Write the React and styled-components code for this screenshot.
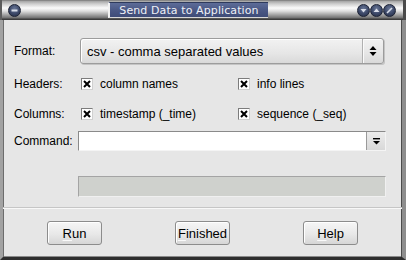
import React from 'react';
import styled, { createGlobalStyle } from 'styled-components';

const GlobalStyle = createGlobalStyle`
    html, body {
        margin: 0;
        padding: 0;
        background: #e6e6e6;
    }
    body {
        font-family: "Liberation Sans", Arial, sans-serif;
        font-size: 12px;
        color: #000;
    }
`;

const Window = styled.div`
    width: 406px;
    height: 260px;
    display: flex;
    flex-direction: column;
    box-sizing: border-box;
    background: #e6e6e6;
`;

// Title bar
const TitleBar = styled.div`
    height: 20px;
    display: flex;
    align-items: center;
    box-sizing: border-box;
    border-left: 2px solid #5c5c5c;
    border-right: 3px solid #4a4a4a;
    background: linear-gradient(to bottom,
        #6a6a6a 0px, #a4a4a4 1px, #cfcfcf 4px, #fbfbfb 8px,
        #e0e0e0 11px, #a0a0a0 15px, #707070 18px, #3c3c3c 19px, #3c3c3c 20px);
`;

const LeftArea = styled.div`
    width: 106px;
    display: flex;
    align-items: center;
    padding-left: 6px;
    box-sizing: border-box;
`;

const TitleBox = styled.div`
    width: 160px;
    height: 16px;
    display: flex;
    align-items: center;
    justify-content: center;
    box-sizing: border-box;
    border-left: 2px solid #f2f2f2;
    border-top: 1px solid #2e3a5c;
    border-bottom: 1px solid #d8d8d8;
    background: linear-gradient(to bottom, #5d6c98 0%, #4a5885 50%, #3f4c78 100%);
    color: #eef0f6;
    font-family: "DejaVu Sans", sans-serif;
    font-size: 11px;
    letter-spacing: 0.1px;
`;

const Spacer = styled.div`
    flex: 1;
`;

const ButtonGroup = styled.div`
    display: flex;
    gap: 0px;
    padding-right: 7px;
`;

const CircleButton = styled.div`
    width: 13px;
    height: 13px;
    border-radius: 50%;
    box-sizing: border-box;
    border: 1px solid #1c2234;
    background: radial-gradient(circle at 50% 35%, #6a7898 0%, #3c4868 55%, #222a40 100%);
    display: flex;
    align-items: center;
    justify-content: center;
    margin-right: ${p => (p.$gap ? p.$gap : 0)}px;
`;

const Glyph = ({ kind }) => (
    <svg width="9" height="9" viewBox="0 0 9 9">
        {kind === 'minus' && <rect x="1.5" y="3.5" width="6" height="2" fill="#d8dde8" />}
        {kind === 'down' && <polygon points="1.5,3 7.5,3 4.5,6.5" fill="#d8dde8" />}
        {kind === 'up' && <polygon points="1.5,6 7.5,6 4.5,2.5" fill="#d8dde8" />}
        {kind === 'slash' && <line x1="2" y1="7" x2="7" y2="2" stroke="#d8dde8" strokeWidth="1.6" />}
    </svg>
);

// Window body
const Body = styled.div`
    flex: 1;
    display: flex;
    flex-direction: column;
    border-left: 3px solid #a2a2a2;
    border-right: 4px solid #8e8e8e;
    border-bottom: 3px solid #2e2e2e;
    box-shadow: inset 1px 0 #6c6c6c, inset -1px 0 #4c4c4c, inset 0 -1px #8a8a8a;
    box-sizing: border-box;
`;

const Form = styled.div`
    padding: 18px 16px 0 11px;
    display: flex;
    flex-direction: column;
`;

const Row = styled.div`
    display: flex;
    align-items: center;
    height: ${p => p.$h}px;
    margin-top: ${p => p.$top || 0}px;
`;

const Label = styled.div`
    width: 64px;
    flex-shrink: 0;
`;

const Control = styled.div`
    flex: 1;
    display: flex;
    align-items: center;
    height: 100%;
`;

// Format combo
const Combo = styled.div`
    flex: 1;
    height: 100%;
    margin: 0 2px;
    display: flex;
    box-sizing: border-box;
    border: 1px solid #9c9c9c;
    border-radius: 3px;
    background: linear-gradient(to bottom, #f2f2f2 0%, #e6e6e6 60%, #d9d9d9 100%);
    box-shadow: 1px 1px 0 #c4c4c4, inset 1px 1px 0 #fff;
`;

const ComboText = styled.div`
    flex: 1;
    display: flex;
    align-items: center;
    padding-left: 6px;
    font-size: 13px;
`;

const ComboArrows = styled.div`
    width: 20px;
    border-left: 1px solid #b0b0b0;
    box-shadow: inset 1px 0 #fafafa;
    display: flex;
    align-items: center;
    justify-content: center;
`;

// Checkboxes
const CheckGrid = styled.div`
    display: grid;
    grid-template-columns: 157px 1fr;
    padding-left: 3px;
    flex: 1;
`;

const CheckItem = styled.div`
    display: flex;
    align-items: center;
    gap: 7px;
`;

const Box = styled.div`
    width: 12px;
    height: 12px;
    box-sizing: border-box;
    background: #fff;
    border-top: 1px solid #7c7c7c;
    border-left: 1px solid #7c7c7c;
    border-right: 1px solid #d0d0d0;
    border-bottom: 1px solid #d0d0d0;
    display: flex;
    align-items: center;
    justify-content: center;
`;

const Check = ({ label }) => (
    <CheckItem>
        <Box>
            <svg width="8" height="8" viewBox="0 0 8 8">
                <path d="M1 1 L7 7 M7 1 L1 7" stroke="#000" strokeWidth="2" />
            </svg>
        </Box>
        <span>{label}</span>
    </CheckItem>
);

// Command entry
const Entry = styled.div`
    flex: 1;
    height: 100%;
    display: flex;
    box-sizing: border-box;
    background: #fff;
    border-top: 1px solid #8a8a8a;
    border-left: 1px solid #8a8a8a;
    border-bottom: 1px solid #f4f4f4;
    border-right: 1px solid #f4f4f4;
`;

const EntryButton = styled.div`
    width: 19px;
    margin-left: auto;
    box-sizing: border-box;
    border-left: 1px solid #9a9a9a;
    background: linear-gradient(to bottom, #ececec, #d8d8d8);
    display: flex;
    align-items: center;
    justify-content: center;
`;

const Progress = styled.div`
    flex: 1;
    height: 100%;
    box-sizing: border-box;
    background: #cfd1cd;
    border-top: 1px solid #a4a4a4;
    border-left: 1px solid #a4a4a4;
    border-bottom: 1px solid #f0f0f0;
    border-right: 1px solid #f0f0f0;
`;

// Footer buttons
const Footer = styled.div`
    margin-top: auto;
    height: 50px;
    border-top: 1px solid #c6c6c6;
    box-shadow: inset 0 1px #f8f8f8;
    display: flex;
    justify-content: center;
    align-items: flex-start;
    gap: 73px;
    padding-top: 13px;
    box-sizing: border-box;
`;

const Button = styled.div`
    width: 55px;
    height: 24px;
    box-sizing: border-box;
    border: 1px solid #8c8c8c;
    border-radius: 3px;
    background: linear-gradient(to bottom, #f6f6f6 0%, #e8e8e8 55%, #d6d6d6 100%);
    box-shadow: inset 1px 1px 0 #fff;
    display: flex;
    align-items: center;
    justify-content: center;
    font-size: 13px;
`;

const Mnemonic = styled.span`
    text-decoration: underline;
    text-decoration-color: #fafafa;
    text-underline-offset: 2px;
`;

const Btn = ({ text }) => (
    <Button>
        <Mnemonic>{text[0]}</Mnemonic>{text.slice(1)}
    </Button>
);

const App = () => (
    <Window>
        <GlobalStyle />
        <TitleBar>
            <LeftArea>
                <CircleButton><Glyph kind="minus" /></CircleButton>
            </LeftArea>
            <TitleBox>Send Data to Application</TitleBox>
            <Spacer />
            <ButtonGroup>
                <CircleButton><Glyph kind="down" /></CircleButton>
                <CircleButton><Glyph kind="up" /></CircleButton>
                <CircleButton><Glyph kind="slash" /></CircleButton>
            </ButtonGroup>
        </TitleBar>
        <Body>
            <Form>
                <Row $h={26}>
                    <Label>Format:</Label>
                    <Control>
                        <Combo>
                            <ComboText>csv - comma separated values</ComboText>
                            <ComboArrows>
                                <svg width="8" height="12" viewBox="0 0 8 12">
                                    <polygon points="0.5,5 7.5,5 4,1" fill="#000" />
                                    <polygon points="0.5,7 7.5,7 4,11" fill="#000" />
                                </svg>
                            </ComboArrows>
                        </Combo>
                    </Control>
                </Row>
                <Row $h={24} $top={8}>
                    <Label>Headers:</Label>
                    <CheckGrid>
                        <Check label="column names" />
                        <Check label="info lines" />
                    </CheckGrid>
                </Row>
                <Row $h={24} $top={6}>
                    <Label>Columns:</Label>
                    <CheckGrid>
                        <Check label="timestamp (_time)" />
                        <Check label="sequence (_seq)" />
                    </CheckGrid>
                </Row>
                <Row $h={20} $top={5}>
                    <Label>Command:</Label>
                    <Control>
                        <Entry>
                            <EntryButton>
                                <svg width="9" height="9" viewBox="0 0 9 9">
                                    <rect x="1" y="1" width="7" height="1.4" fill="#000" />
                                    <polygon points="1,4 8,4 4.5,7.5" fill="#000" />
                                </svg>
                            </EntryButton>
                        </Entry>
                    </Control>
                </Row>
                <Row $h={21} $top={25}>
                    <Label />
                    <Control>
                        <Progress />
                    </Control>
                </Row>
            </Form>
            <Footer>
                <Btn text="Run" />
                <Btn text="Finished" />
                <Btn text="Help" />
            </Footer>
        </Body>
    </Window>
);

export default App;
